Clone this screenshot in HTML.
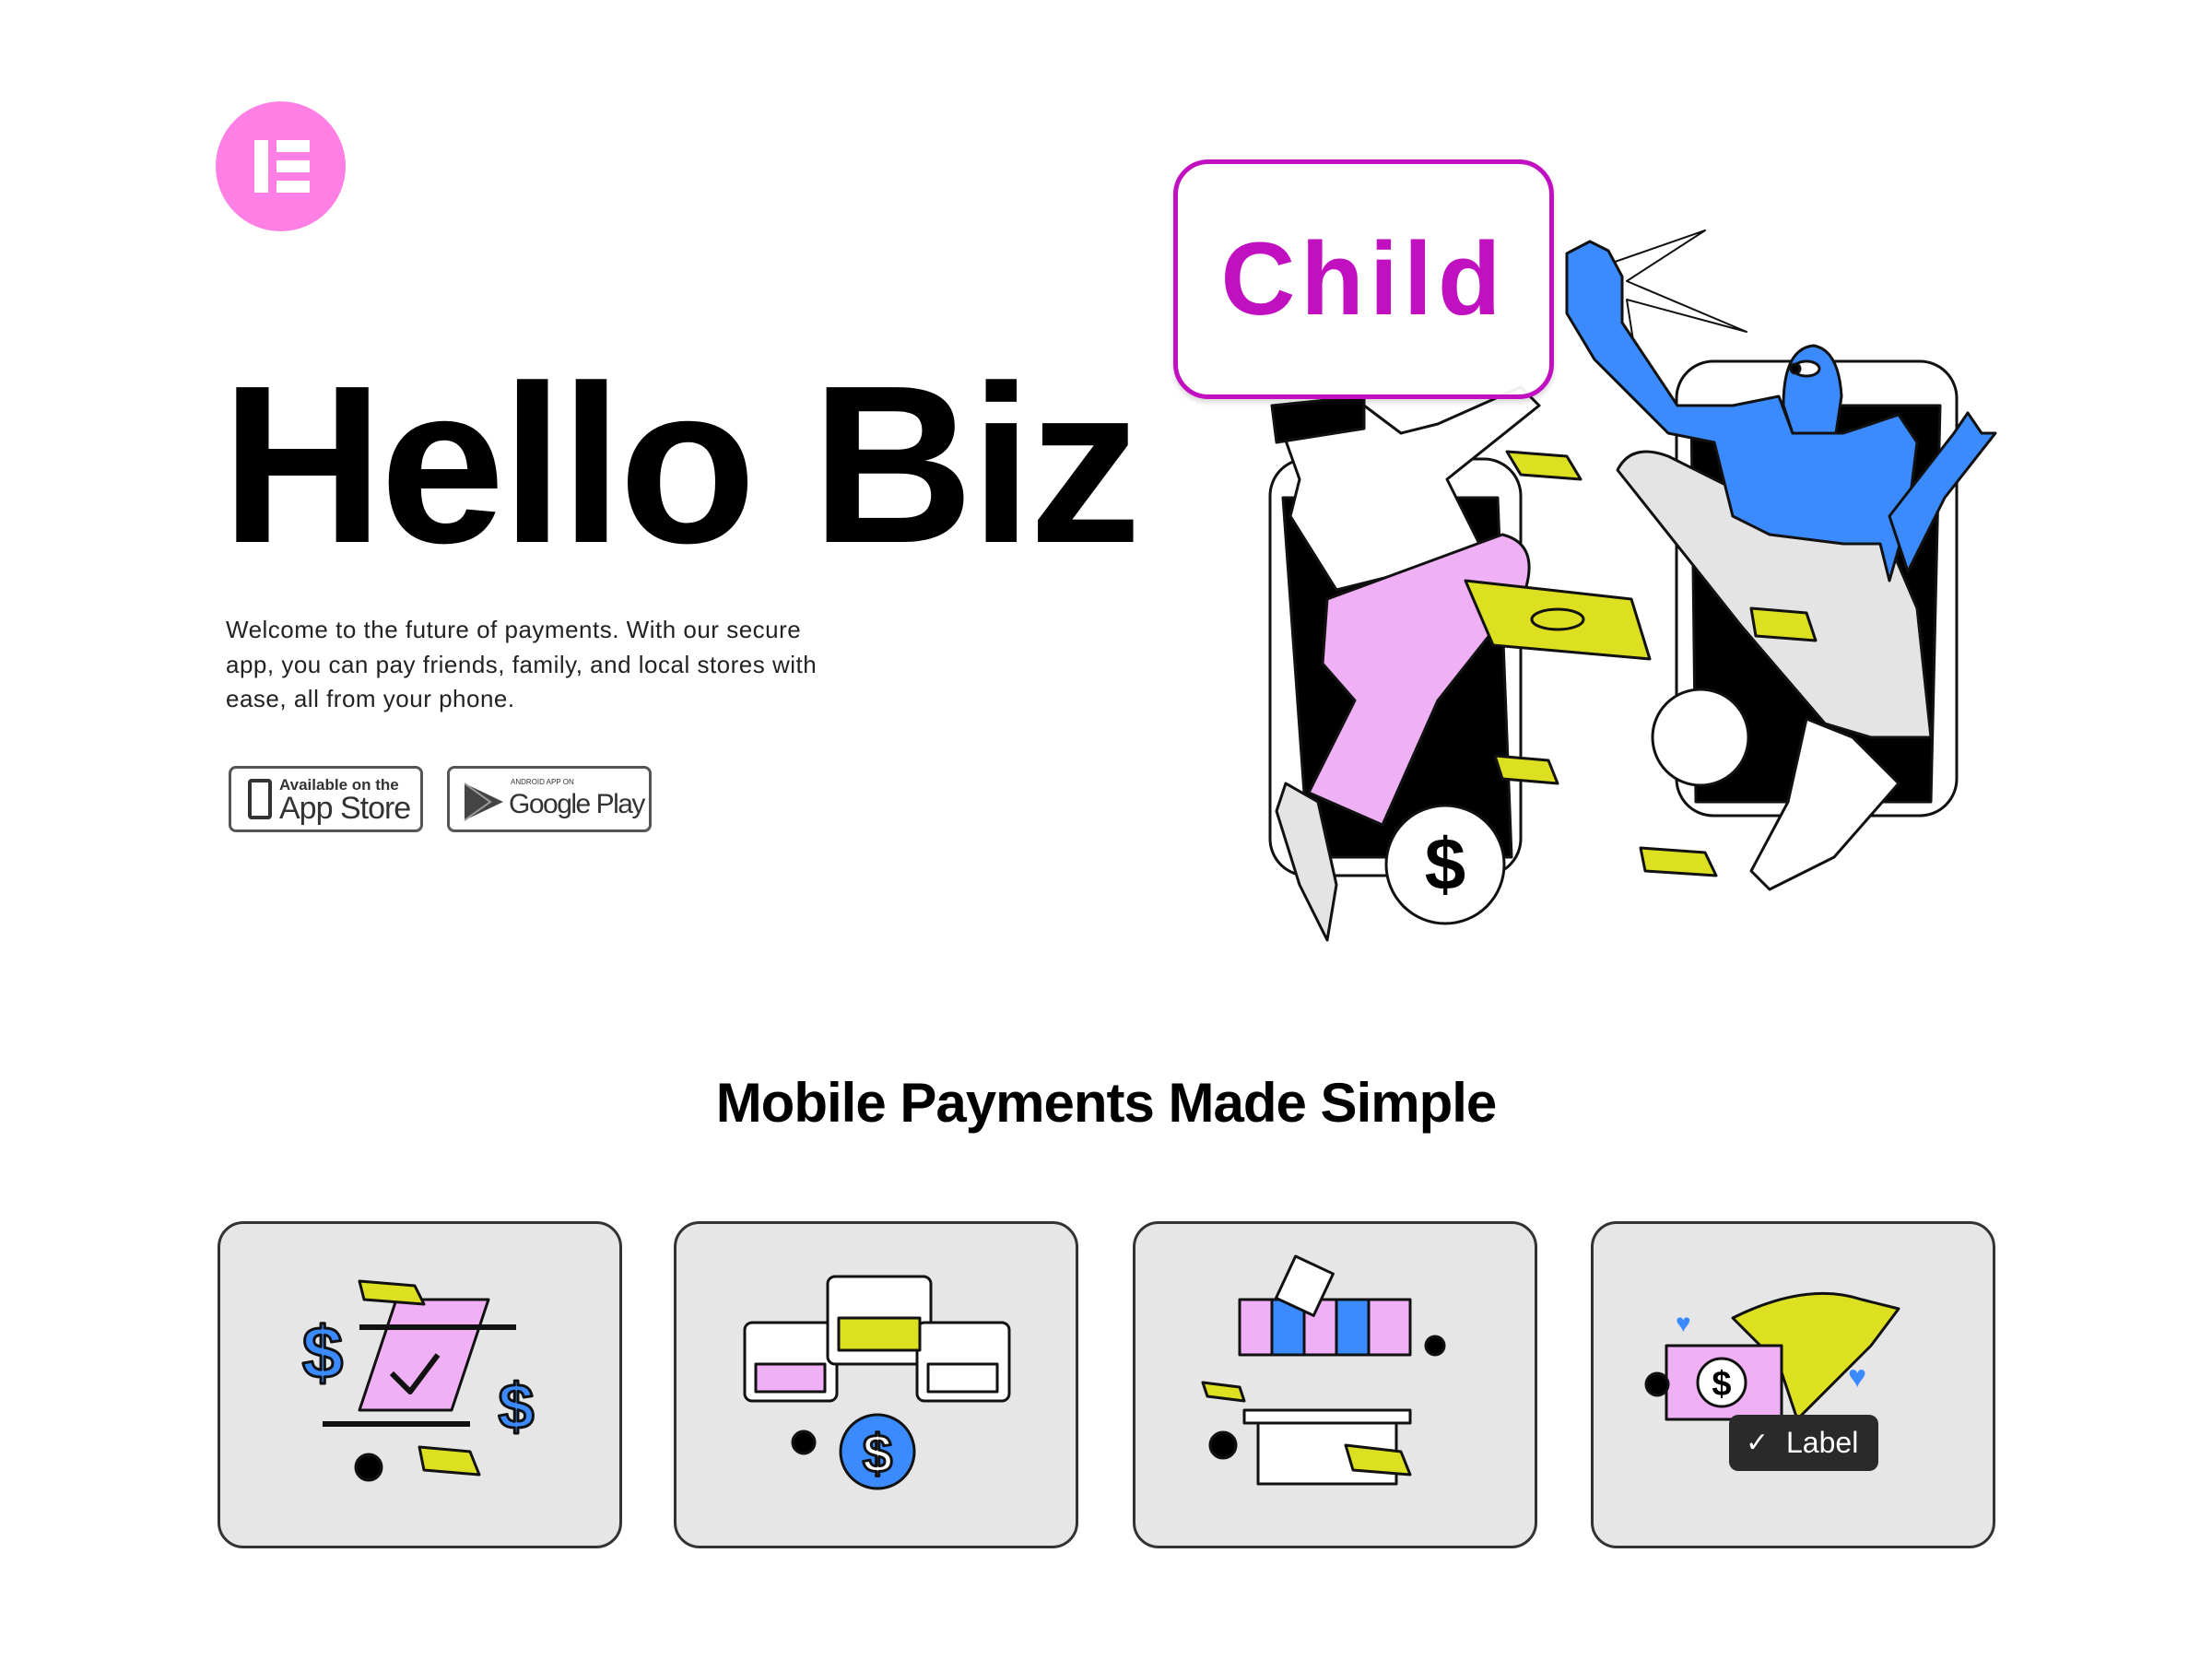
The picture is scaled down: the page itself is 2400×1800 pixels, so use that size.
<!DOCTYPE html>
<html><head><meta charset="utf-8"><style>
*{margin:0;padding:0;box-sizing:border-box}
body{width:2400px;height:1800px;background:#fff;position:relative;overflow:hidden;font-family:"Liberation Sans",sans-serif;color:#000}
.abs{position:absolute}
.logo{left:234px;top:110px;width:141px;height:141px;border-radius:50%;background:#ff7fe4}
.logo i{position:absolute;background:#fff}
h1{position:absolute;left:240px;top:382px;font-size:244px;font-weight:bold;letter-spacing:-4px;line-height:1}
p.lead{position:absolute;left:245px;top:665px;width:670px;font-size:26px;line-height:37.5px;color:#222;letter-spacing:0.5px}
.badge{position:absolute;top:831px;height:72px;border:3px solid #555;border-radius:8px;background:#fff;white-space:nowrap}
.child{position:absolute;left:1273px;top:173px;width:413px;height:260px;border:5px solid #c010c0;border-radius:38px;background:rgba(255,255,255,.93);color:#c010c0;font-size:112px;font-weight:bold;letter-spacing:6px;text-align:center;line-height:250px;box-shadow:0 4px 6px rgba(0,0,0,.15)}
h2{position:absolute;left:0;width:2400px;text-align:center;top:1162px;font-size:60px;font-weight:bold;letter-spacing:-1px}
.card{position:absolute;top:1325px;width:439px;height:355px;background:#e6e6e6;border:3px solid #333;border-radius:28px}
.label{position:absolute;left:1876px;top:1535px;width:162px;height:61px;background:#2a2a2a;border-radius:10px;color:#fff;font-size:32px;line-height:61px;padding-left:62px}
</style></head><body>
<div class="abs logo"><i style="left:42px;top:42px;width:15px;height:57px"></i><i style="left:66px;top:42px;width:36px;height:13px"></i><i style="left:66px;top:64px;width:36px;height:13px"></i><i style="left:66px;top:86px;width:36px;height:13px"></i></div>
<h1>Hello Biz</h1>
<p class="lead">Welcome to the future of payments. With our secure app, you can pay friends, family, and local stores with ease, all from your phone.</p>
<div class="badge" style="left:248px;width:211px">
 <div class="abs" style="left:18px;top:11px;width:26px;height:44px;border:4px solid #333;border-radius:4px"></div>
 <div class="abs" style="left:52px;top:8px;font-size:17px;font-weight:bold;color:#333">Available on the</div>
 <div class="abs" style="left:52px;top:24px;font-size:34px;color:#333;letter-spacing:-1px">App Store</div>
</div>
<div class="badge" style="left:485px;width:222px">
 <svg class="abs" style="left:14px;top:14px" width="46" height="44"><polygon points="2,2 44,22 2,42" fill="#444"/><polyline points="2,2 30,22 2,42" fill="none" stroke="#999" stroke-width="2"/></svg>
 <div class="abs" style="left:66px;top:10px;font-size:8px;color:#333">ANDROID APP ON</div>
 <div class="abs" style="left:64px;top:22px;font-size:30px;color:#333;letter-spacing:-1.5px">Google Play</div>
</div>

<svg class="abs" style="left:0;top:0" width="2400" height="1800" viewBox="0 0 2400 1800">
<g stroke="#111" stroke-width="3" stroke-linejoin="round">
 <polyline points="1735,290 1850,250 1765,305 1895,360 1765,325 1780,420" fill="none" stroke-width="2"/>
 <!-- left phone -->
 <rect x="1378" y="498" width="272" height="452" rx="40" fill="#fff"/>
 <path d="M1392,540 L1625,540 L1640,930 L1420,930 Z" fill="#000"/>
 <!-- right phone -->
 <rect x="1819" y="392" width="304" height="493" rx="40" fill="#fff"/>
 <path d="M1835,440 L2105,440 L2095,870 L1840,870 Z" fill="#000"/>
 <!-- grey legs -->
 <path d="M1755,510 Q1770,480 1810,495 L1940,560 L2050,590 L2080,660 L2095,800 L2030,800 L1980,785 L1890,680 Z" fill="#e4e4e4"/>
 <path d="M1960,780 L2010,800 L2060,850 L1990,930 L1920,965 L1900,945 L1940,870 Z" fill="#fff"/>
 <circle cx="1845" cy="800" r="52" fill="#fff"/>
 <!-- blue figure -->
 <path d="M1700,275 L1725,262 L1745,272 L1760,300 L1760,350 L1820,440 L1880,440 L1930,430 L1945,470 L2000,470 L2060,450 L2080,480 L2070,560 L2050,630 L2040,590 L2000,590 L1920,580 L1880,560 L1860,480 L1810,470 L1730,390 L1700,340 Z" fill="#3b8bff"/>
 <path d="M1935,440 Q1935,378 1968,375 Q1995,380 1998,430 L1992,470 L1945,470 Z" fill="#3b8bff"/>
 <ellipse cx="1960" cy="400" rx="14" ry="8" fill="#fff"/><circle cx="1948" cy="400" r="5" fill="#000"/>
 <path d="M2050,560 L2120,470 L2135,448 L2150,470 L2165,470 L2110,540 L2070,620 Z" fill="#3b8bff"/>
 <!-- white figure -->
 <path d="M1385,450 L1480,440 L1520,470 L1560,460 L1650,420 L1670,440 L1570,520 L1610,600 L1450,640 L1400,560 L1410,520 Z" fill="#fff"/>
 <path d="M1380,440 L1480,430 L1480,465 L1385,480 Z" fill="#000"/>
 <!-- pink legs -->
 <path d="M1440,650 L1630,580 Q1670,590 1655,640 L1560,760 L1500,895 L1420,860 L1470,760 L1435,720 Z" fill="#f0b0f5"/>
 <path d="M1395,850 L1430,870 L1450,960 L1440,1020 L1410,960 L1385,880 Z" fill="#e4e4e4"/>
 <!-- bills -->
 <path d="M1590,630 L1770,650 L1790,715 L1620,700 Z" fill="#dde020"/>
 <ellipse cx="1690" cy="672" rx="28" ry="11" fill="none"/>
 <path d="M1635,490 L1700,495 L1715,520 L1650,515 Z" fill="#dde020"/>
 <path d="M1622,820 L1680,825 L1690,850 L1630,845 Z" fill="#dde020"/>
 <path d="M1900,660 L1960,665 L1970,695 L1905,690 Z" fill="#dde020"/>
 <path d="M1780,920 L1850,925 L1862,950 L1785,945 Z" fill="#dde020"/>
 <!-- coin -->
 <circle cx="1568" cy="938" r="64" fill="#fff"/>
 <text x="1568" y="965" font-family="Liberation Sans" font-weight="bold" font-size="80" text-anchor="middle" fill="#000" stroke="none">$</text>
</g>
</svg>

<div class="child">Child</div>
<h2>Mobile Payments Made Simple</h2>

<div class="card" style="left:236px"></div>
<div class="card" style="left:731px"></div>
<div class="card" style="left:1229px"></div>
<div class="card" style="left:1726px"></div>

<svg class="abs" style="left:0;top:0" width="2400" height="1800" viewBox="0 0 2400 1800">
<g stroke="#111" stroke-width="3" stroke-linejoin="round">
 <path d="M430,1410 L530,1410 L490,1530 L390,1530 Z" fill="#f0b0f5"/>
 <path d="M390,1440 L560,1440 M350,1545 L510,1545" stroke-width="6" fill="none"/>
 <polyline points="425,1490 445,1510 475,1470" fill="none" stroke-width="6"/>
 <text x="350" y="1495" font-size="80" font-weight="bold" font-family="Liberation Sans" fill="#3b8bff" text-anchor="middle">$</text>
 <text x="560" y="1550" font-size="70" font-weight="bold" font-family="Liberation Sans" fill="#3b8bff" text-anchor="middle">$</text>
 <path d="M390,1390 L450,1395 L460,1415 L395,1410 Z" fill="#dde020"/>
 <path d="M455,1570 L510,1575 L520,1600 L460,1595 Z" fill="#dde020"/>
 <circle cx="400" cy="1592" r="14" fill="#000"/>
 <rect x="808" y="1435" width="100" height="85" rx="8" fill="#fff"/>
 <rect x="898" y="1385" width="112" height="95" rx="8" fill="#fff"/>
 <rect x="995" y="1435" width="100" height="85" rx="8" fill="#fff"/>
 <rect x="820" y="1480" width="75" height="30" fill="#f0b0f5"/>
 <rect x="910" y="1430" width="88" height="35" fill="#dde020"/>
 <rect x="1007" y="1480" width="75" height="30" fill="#fff"/>
 <circle cx="952" cy="1575" r="40" fill="#3b8bff"/>
 <text x="952" y="1597" font-size="58" font-weight="bold" font-family="Liberation Sans" fill="#fff" text-anchor="middle">$</text>
 <circle cx="872" cy="1565" r="12" fill="#000"/>
 <path d="M1345,1410 L1530,1410 L1530,1470 L1345,1470 Z" fill="#f0b0f5"/>
 <path d="M1380,1410 L1415,1410 L1415,1470 L1380,1470 Z M1450,1410 L1485,1410 L1485,1470 L1450,1470 Z" fill="#3b8bff"/>
 <rect x="1365" y="1530" width="150" height="80" fill="#fff"/>
 <rect x="1350" y="1530" width="180" height="14" fill="#fff"/>
 <rect x="1393" y="1370" width="45" height="50" fill="#fff" transform="rotate(25 1415 1395)"/>
 <path d="M1460,1568 L1520,1575 L1530,1600 L1468,1595 Z" fill="#dde020"/>
 <path d="M1305,1500 L1345,1505 L1350,1520 L1310,1515 Z" fill="#dde020"/>
 <circle cx="1327" cy="1568" r="14" fill="#000"/>
 <circle cx="1557" cy="1460" r="10" fill="#000"/>
 <path d="M1880,1430 Q1960,1390 2020,1410 L2060,1420 L2030,1460 L1950,1540 L1930,1480 Z" fill="#dde020"/>
 <rect x="1808" y="1460" width="125" height="80" fill="#f0b0f5"/>
 <circle cx="1868" cy="1500" r="26" fill="#fff"/>
 <text x="1868" y="1514" font-size="38" font-weight="bold" font-family="Liberation Sans" fill="#000" text-anchor="middle" stroke="none">$</text>
 <circle cx="1798" cy="1502" r="12" fill="#000"/>
 <text x="1818" y="1445" font-size="28" fill="#3b8bff" stroke="none">♥</text>
 <text x="2005" y="1505" font-size="34" fill="#3b8bff" stroke="none">♥</text>
</g>
</svg>
<div class="label"><span style="position:absolute;left:18px;font-size:30px">✓</span>Label</div>
</body></html>
